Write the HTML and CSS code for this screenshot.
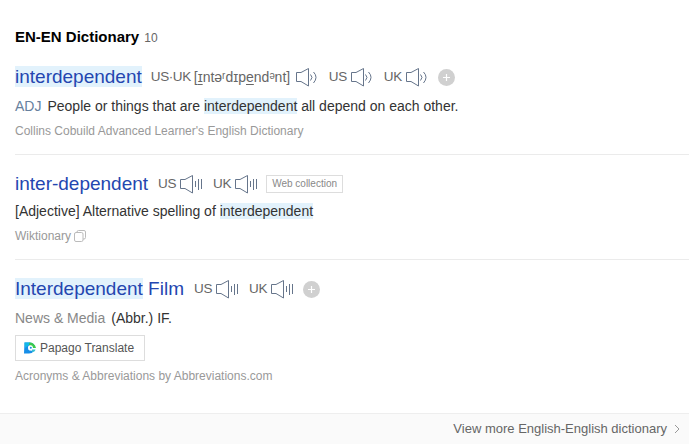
FILE: index.html
```html
<!DOCTYPE html>
<html lang="en">
<head>
<meta charset="utf-8">
<title>EN-EN Dictionary</title>
<link rel="stylesheet" href="styles.css">
</head>
<body>
<svg class="defs" aria-hidden="true">
  <symbol id="wave" viewBox="0 0 23 20"><path d="M5 5.5H.5V14.5H5L12.5 19V1.500L5 5.500" /><path d="M14.500 7.500q3 2.800 0 6M17.500 5q5 5.200 0 11" /></symbol>
  <symbol id="bars" viewBox="0 0 23 20"><path d="M5 5.5H.5V14.5H5L12.5 19V1.500L5 5.500" /><path d="M15.500 7v6M18.500 5v11M21.500 5v10" /></symbol>
  <symbol id="plus" viewBox="0 0 17 17"><circle cx="8.5" cy="8.5" r="8.5" fill="#d0d0d0" stroke="none"/><path d="M8.5 5v7M5 8.5h7" stroke="#fff" stroke-width="1.2"/></symbol>
</svg>
<main>
  <header class="heading"><h1>EN-EN Dictionary</h1><span class="count">10</span></header>
  <section class="entry">
    <div class="word"><a class="term"><mark>interdependent</mark></a>
      <span class="accent region">US·UK</span><span class="phonetic">[<u>ɪ</u>ntəʳdɪp<u>e</u>ndᵊnt]</span><svg class="speaker"><use href="#wave"/></svg>
      <span class="accent">US</span><svg class="speaker"><use href="#wave"/></svg>
      <span class="accent">UK</span><svg class="speaker"><use href="#wave"/></svg>
      <svg class="add"><use href="#plus"/></svg></div>
    <p class="meaning"><span class="pos">ADJ</span>People or things that are <mark>interdependent</mark> all depend on each other.</p>
    <p class="source">Collins Cobuild Advanced Learner's English Dictionary</p>
  </section>
  <section class="entry second">
    <div class="word"><a class="term">inter-dependent</a>
      <span class="accent">US</span><svg class="speaker"><use href="#bars"/></svg>
      <span class="accent">UK</span><svg class="speaker"><use href="#bars"/></svg>
      <span class="tag">Web collection</span></div>
    <p class="meaning">[Adjective] Alternative spelling of <mark>interdependent</mark></p>
    <p class="source">Wiktionary<svg class="copy" viewBox="0 0 12 12"><rect x="3" y=".5" width="8.5" height="8.5" rx="1.5"/><rect x=".5" y="2.5" width="8.5" height="9" rx="1.5" fill="#fff"/></svg></p>
  </section>
  <section class="entry third">
    <div class="word"><a class="term"><mark>Interdependent</mark> Film</a>
      <span class="accent">US</span><svg class="speaker"><use href="#bars"/></svg>
      <span class="accent">UK</span><svg class="speaker"><use href="#bars"/></svg>
      <svg class="add"><use href="#plus"/></svg></div>
    <p class="meaning"><span class="topic">News &amp; Media</span><span class="abbr">(Abbr.) IF.</span></p>
    <a class="papago"><svg viewBox="0 0 12 12"><path d="M.5 .5H6A5.500 5.500 0 0 1 11 5H7L6 8 10 9Q8 11.500 5 11.500H0Z" fill="#168ee8"/><path d="M.5 .5H6L5 3 1 6Z" fill="#12b8e8"/><path d="M5.500 .5Q10.500 .5 12 6H8L5 3Z" fill="#39c94b"/><path d="M4 6A2.500 2.500 0 0 1 9 5.500L8 8.500H5.500Q4 8 4 6Z" fill="#fff"/><circle cx="6.8" cy="5.800" r="1" fill="#168ee8"/><path d="M8 7.500H11.500Q11 10 8 10Z" fill="#35bfd3"/></svg>Papago Translate</a>
    <p class="source">Acronyms &amp; Abbreviations by Abbreviations.com</p>
  </section>
</main>
<footer><a>View more English-English dictionary</a><svg viewBox="0 0 6 10"><path d="M1 1l4 4-4 4"/></svg></footer>
</body>
</html>
```
FILE: styles.css
```css
* { box-sizing: border-box; }
body { margin: 0; width: 689px; height: 444px; overflow: hidden; display: flex; flex-direction: column; background: #fff; color: #333; font: 14px/20px "Liberation Sans", Arial, sans-serif; white-space: nowrap; }
h1, p { margin: 0; }
svg { fill: none; stroke: #66758b; flex: none; }
mark { background: #e2f2fc; color: inherit; }
.defs { position: absolute; width: 0; height: 0; }
main { flex: 1; padding-left: 15px; }
.heading { display: flex; align-items: center; height: 54px; padding-top: 20px; }
h1 { font-size: 15px; line-height: 20px; color: #000; }
.count { margin-left: 5px; padding-top: 1px; font-size: 12px; color: #666; }
.entry { height: 101px; padding-top: 10px; border-bottom: 1px solid #ebebeb; }
.second { height: 105px; padding-top: 16px; }
.third { height: 153px; padding-top: 16px; border: 0; }
.word { display: flex; align-items: center; height: 26px; color: #666; }
.term { font-size: 19px; line-height: 22px; color: #2446b0; }
.phonetic { width: 98px; margin-left: 3px; }
.phonetic u { text-underline-offset: 2px; }
.accent { width: 18px; margin-left: 10px; font-size: 13.5px; letter-spacing: -.3px; }
.accent.region { width: 40px; margin-left: 9px; letter-spacing: -.4px; }
.speaker { width: 23px; height: 20px; margin-left: 4px; }
.add { width: 17px; height: 17px; margin-left: 9px; }
.tag { margin-left: 8px; width: 77px; height: 18px; border: 1px solid #ddd; font-size: 10px; line-height: 15px; text-align: center; color: #888; }
.meaning { margin-top: 6px; }
.second .meaning { margin-top: 4px; }
.pos { color: #66809e; margin-right: 6px; }
.source { display: flex; align-items: center; margin-top: 7px; height: 16px; font-size: 12px; color: #999; }
.copy { width: 12px; height: 12px; margin-left: 3px; stroke: #bbb; }
.topic { color: #888; margin-right: 6px; }
.papago { display: flex; align-items: center; width: 130px; height: 26px; margin-top: 7px; padding-left: 8px; border: 1px solid #ddd; font-size: 12px; color: #555; }
.papago svg { width: 12px; height: 12px; margin-right: 4px; stroke: none; }
footer { display: flex; justify-content: flex-end; align-items: center; height: 31px; padding-right: 9px; background: #fafafa; border-top: 1px solid #eee; color: #666; font-size: 13px; }
footer svg { width: 6px; height: 10px; margin-left: 7px; stroke: #999; }
```
